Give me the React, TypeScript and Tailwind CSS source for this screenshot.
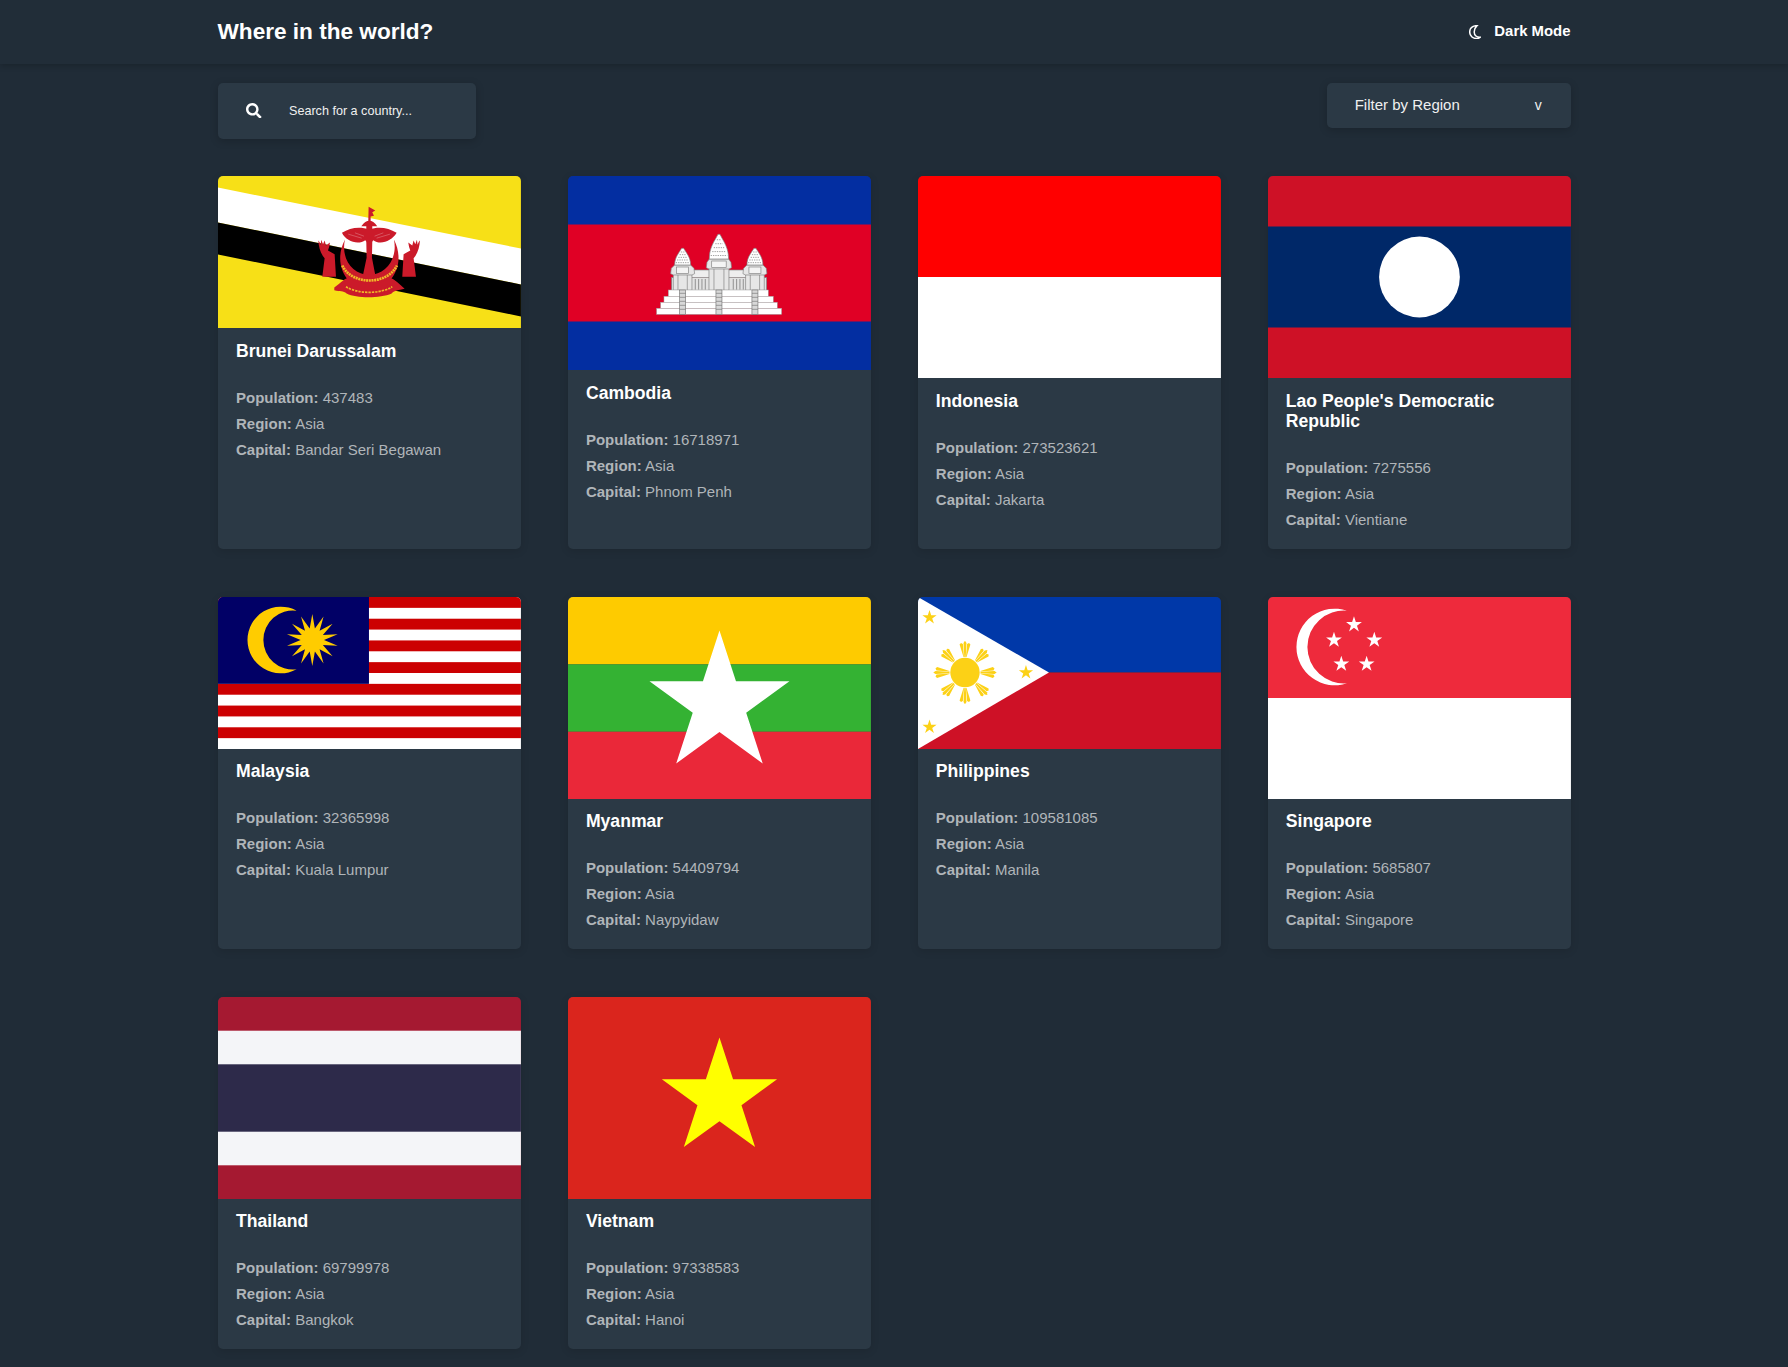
import { FaSearch } from "react-icons/fa";
import type { ReactNode } from "react";

function starPoints(cx: number, cy: number, r: number, n = 5, inner = 0.382) {
  const pts: string[] = [];
  for (let i = 0; i < n * 2; i++) {
    const rad = i % 2 === 0 ? r : r * inner;
    const a = -Math.PI / 2 + (i * Math.PI) / n;
    pts.push(`${(cx + rad * Math.cos(a)).toFixed(2)},${(cy + rad * Math.sin(a)).toFixed(2)}`);
  }
  return pts.join(" ");
}

function Svg({ h, children }: { h: number; children: ReactNode }) {
  return (
    <svg viewBox={`0 0 303 ${h}`} preserveAspectRatio="none" className="block w-full" style={{ height: h }}>
      {children}
    </svg>
  );
}

function Brunei() {
  const red = "#cb1a2a";
  const Hand = () => (
    <path d="M85,153 C88,156 90,160 92,166 L94,151 L99,164 L104,153 L108,168 C112,165 116,161 120,159 C119,168 117,176 114,183 L134,194 L138,262 L97,262 L104,206 C92,194 86,172 85,153Z" fill={red} />
  );
  return (
    <Svg h={152}>
      <rect width="303" height="152" fill="#f7e017" />
      <polygon points="0,11.5 303,72.5 303,108.5 0,46.5" fill="#fff" />
      <polygon points="0,46.5 303,108.5 303,140.5 0,78.5" fill="#000" />
      <g transform="translate(72 13.5) scale(0.3333)">
        <path d="M236,52 L256,63 L247,68 L252,79 L242,81 L242,95 L235,95Z" fill={red} />
        <path d="M214,110 Q238,78 262,110Z" fill={red} />
        <rect x="229" y="105" width="18" height="22" fill={red} />
        <path d="M238,120 C210,110 180,114 156,130 C168,156 205,168 226,152 L238,168 L250,152 C270,168 305,156 320,130 C295,114 265,110 238,120Z" fill={red} />
        <path d="M175,134 L215,146 M195,130 L222,140 M300,134 L260,146 M280,130 L254,140" stroke="#fff" strokeWidth="1.5" opacity="0.5" />
        <polygon points="229,155 247,155 246,205 257,262 218,262 230,205" fill={red} />
        <path d="M165,150 C126,225 172,300 238,300 C304,300 350,225 312,150 C324,208 287,256 238,256 C188,256 152,208 165,150Z" fill={red} />
        <path d="M157,228 C185,288 292,288 321,228" fill="none" stroke="#f0b828" strokeWidth="8" strokeDasharray="6 2" />
        <path d="M133,294 C150,282 160,270 175,264 C210,292 265,292 300,264 C315,270 330,285 344,298 C325,303 315,302 305,312 C270,327 200,327 170,312 C160,302 150,307 133,302Z" fill={red} />
        <path d="M168,292 C205,314 270,314 307,292" fill="none" stroke="#f0b828" strokeWidth="5" strokeDasharray="7 3" />
        <Hand />
        <g transform="translate(475 0) scale(-1 1)"><Hand /></g>
      </g>
    </Svg>
  );
}

function Tower({ x, top, spire, sw, body, base }: { x: number; top: number; spire: number; sw: number; body: number; base: number }) {
  const h = spire - top;
  const rows = [0.22, 0.38, 0.54, 0.7, 0.86];
  return (
    <g stroke="#808080" strokeWidth="2" fill="#fff">
      <path d={`M${x - body},${base} L${x - body},${spire + 30} L${x - body - 8},${spire + 26} L${x - body - 6},${spire + 10} L${x - sw},${spire} L${x + sw},${spire} L${x + body + 6},${spire + 10} L${x + body + 8},${spire + 26} L${x + body},${spire + 30} L${x + body},${base}Z`} fill="#e6e6e6" />
      <path d={`M${x - 3},${top} L${x + 3},${top} C${x + sw * 0.5},${top + h * 0.3} ${x + sw},${top + h * 0.55} ${x + sw},${spire} L${x - sw},${spire} C${x - sw},${top + h * 0.55} ${x - sw * 0.5},${top + h * 0.3} ${x - 3},${top}Z`} />
      {rows.map((l) => (
        <line key={l} x1={x - sw * l} x2={x + sw * l} y1={top + h * l} y2={top + h * l} strokeDasharray="4 3" stroke="#6f6f6f" />
      ))}
      <rect x={x - sw * 0.75} y={spire + 6} width={sw * 1.5} height={20} fill="#f4f4f4" />
      <line x1={x - body * 0.5} x2={x - body * 0.5} y1={spire + 30} y2={base} />
      <line x1={x + body * 0.5} x2={x + body * 0.5} y1={spire + 30} y2={base} />
      <line x1={x - body} x2={x + body} y1={spire + 30} y2={spire + 30} />
    </g>
  );
}

function Cambodia() {
  const steps = [
    [115, 225, 300, 20],
    [102, 244, 328, 19],
    [92, 262, 350, 18],
    [80, 280, 375, 18],
  ];
  return (
    <Svg h={194}>
      <rect width="303" height="194" fill="#032ea1" />
      <rect y="48.5" width="303" height="97" fill="#e00025" />
      <g transform="translate(62 39) scale(0.3333)">
        <rect x="125" y="188" width="285" height="38" fill="#e2e2e2" stroke="#808080" strokeWidth="2" />
        {[196, 206, 216, 226, 310, 320, 330, 340].map((x) => (
          <line key={x} x1={x} x2={x} y1="192" y2="224" stroke="#808080" strokeWidth="2.5" />
        ))}
        <rect x="185" y="165" width="165" height="23" fill="#eee" stroke="#8a8a8a" strokeWidth="2" />
        <Tower x={158} top={100} spire={150} sw={24} body={28} base={226} />
        <Tower x={375} top={100} spire={150} sw={24} body={28} base={226} />
        <Tower x={267} top={58} spire={132} sw={29} body={30} base={226} />
        {steps.map(([x, y, w, h]) => (
          <rect key={y} x={x} y={y} width={w} height={h} fill="#fff" stroke="#a0a0a0" strokeWidth="1.5" />
        ))}
        {[158, 267, 375].map((x) => (
          <g key={x}>
            <rect x={x - 9} y="225" width="18" height="73" fill="#d8d8d8" stroke="#777" strokeWidth="2" />
            {[235, 247, 259, 271, 283].map((y) => (
              <line key={y} x1={x - 9} x2={x + 9} y1={y} y2={y} stroke="#777" strokeWidth="2" />
            ))}
          </g>
        ))}
      </g>
    </Svg>
  );
}

function Indonesia() {
  return (
    <Svg h={202}>
      <rect width="303" height="101" fill="#ff0000" />
      <rect y="101" width="303" height="101" fill="#fff" />
    </Svg>
  );
}

function Lao() {
  return (
    <Svg h={202}>
      <rect width="303" height="202" fill="#ce1126" />
      <rect y="50.5" width="303" height="101" fill="#002868" />
      <circle cx="151.5" cy="101" r="40.4" fill="#fff" />
    </Svg>
  );
}

function Malaysia() {
  const u = 152 / 14;
  return (
    <Svg h={152}>
      <rect width="303" height="152" fill="#fff" />
      {[0, 2, 4, 6, 8, 10, 12].map((i) => (
        <rect key={i} y={i * u} width="303" height={u} fill="#cc0001" />
      ))}
      <rect width="151" height={u * 8} fill="#010066" />
      <g transform="translate(-3 -7) scale(0.3333)">
        <path d="M245,62 A100,100 0 1 0 245,238 A88.7,88.7 0 1 1 245,62Z" fill="#ffcc00" />
        <polygon points={starPoints(292, 150, 78, 14, 0.45)} fill="#ffcc00" />
      </g>
    </Svg>
  );
}

function Myanmar() {
  return (
    <Svg h={202}>
      <rect width="303" height="67.4" fill="#fecb00" />
      <rect y="67.4" width="303" height="67.4" fill="#34b233" />
      <rect y="134.7" width="303" height="67.3" fill="#ea2839" />
      <polygon points={starPoints(151.5, 107, 73.6)} fill="#fff" />
    </Svg>
  );
}

function Philippines() {
  const rays = [0, 45, 90, 135, 180, 225, 270, 315];
  return (
    <Svg h={152}>
      <rect width="303" height="75.5" fill="#0038a8" />
      <rect y="75.5" width="303" height="76.5" fill="#ce1126" />
      <polygon points="0,0 131,75.5 0,152" fill="#fff" />
      <g fill="#fcd116">
        <circle cx="47" cy="75.5" r="14.7" />
        {rays.map((a) => (
          <g key={a} transform={`rotate(${a} 47 75.5)`}>
            <polygon points="45.5,46 47,43.8 48.5,46 47.7,60 46.3,60" />
            <polygon points="41.6,47.6 43,46 44.9,47 46,60 45.5,60" />
            <polygon points="52.4,47.6 51,46 49.1,47 48,60 48.5,60" />
          </g>
        ))}
        <polygon points={starPoints(11.5, 20.5, 7.5)} />
        <polygon points={starPoints(108, 75.5, 7.5)} />
        <polygon points={starPoints(11.5, 130, 7.5)} />
      </g>
    </Svg>
  );
}

function Singapore() {
  return (
    <Svg h={202}>
      <rect width="303" height="101" fill="#ee2a3c" />
      <rect y="101" width="303" height="101" fill="#fff" />
      <g transform="translate(-2 -7) scale(0.3333)" fill="#fff">
        <path d="M243,62 A115,115 0 1 0 243,280 A109.4,109.4 0 1 1 243,62Z" />
        <polygon points={starPoints(264, 104, 25)} />
        <polygon points={starPoints(204, 150, 25)} />
        <polygon points={starPoints(325, 150, 25)} />
        <polygon points={starPoints(226, 222, 25)} />
        <polygon points={starPoints(302, 222, 25)} />
      </g>
    </Svg>
  );
}

function Thailand() {
  return (
    <Svg h={202}>
      <rect width="303" height="202" fill="#a51931" />
      <rect y="33.7" width="303" height="134.6" fill="#f4f5f8" />
      <rect y="67.3" width="303" height="67.4" fill="#2d2a4a" />
    </Svg>
  );
}

function Vietnam() {
  return (
    <Svg h={202}>
      <rect width="303" height="202" fill="#da251d" />
      <polygon points={starPoints(151.5, 101, 60.6)} fill="#ffff00" />
    </Svg>
  );
}

const countries = [
  { name: "Brunei Darussalam", population: "437483", capital: "Bandar Seri Begawan", Flag: Brunei },
  { name: "Cambodia", population: "16718971", capital: "Phnom Penh", Flag: Cambodia },
  { name: "Indonesia", population: "273523621", capital: "Jakarta", Flag: Indonesia },
  { name: "Lao People's Democratic Republic", population: "7275556", capital: "Vientiane", Flag: Lao },
  { name: "Malaysia", population: "32365998", capital: "Kuala Lumpur", Flag: Malaysia },
  { name: "Myanmar", population: "54409794", capital: "Naypyidaw", Flag: Myanmar },
  { name: "Philippines", population: "109581085", capital: "Manila", Flag: Philippines },
  { name: "Singapore", population: "5685807", capital: "Singapore", Flag: Singapore },
  { name: "Thailand", population: "69799978", capital: "Bangkok", Flag: Thailand },
  { name: "Vietnam", population: "97338583", capital: "Hanoi", Flag: Vietnam },
];

function Info({ label, value }: { label: string; value: string }) {
  return (
    <p className="h-[26px] leading-[26px]">
      <b className="font-bold">{label}:</b> {value}
    </p>
  );
}

export default function App() {
  return (
    <div className="min-h-[1367px] bg-[#202c37] font-['Liberation_Sans',Arial,sans-serif] text-white">
      <header className="flex h-[64px] items-center justify-between bg-[#212d38] pl-[217.5px] pr-[217.5px] shadow-[0_2px_6px_rgba(0,0,0,0.2)]">
        <h1 className="text-[22.6px] font-bold">Where in the world?</h1>
        <div className="flex items-center gap-[13px] text-[14.9px] font-bold">
          <svg viewBox="0 0 12 14" className="h-[14px] w-[12px]" fill="none" stroke="currentColor" strokeWidth="1.5">
            <path d="M8 .6C3.5 .9 .7 3.5 .7 7c0 3.8 3.1 6.5 6.8 6.5 1.5 0 2.9-.5 3.8-1.3C7.8 12.5 5.2 10.5 5.2 7c0-3 1.3-5 2.8-6.4Z" />
          </svg>
          <span className="-mt-[1px]">Dark Mode</span>
        </div>
      </header>
      <main className="pb-[19px] pl-[218px] pr-[217.3px]">
        <div className="flex items-start justify-between pt-[19px]">
          <label className="flex h-[56px] w-[258px] items-center rounded-[5px] bg-[#2b3945] pl-[28px] shadow-[0_2px_9px_rgba(0,0,0,0.2)]">
            <FaSearch className="-mt-[1px] h-[15.5px] w-[15.5px] text-white" />
            <input
              readOnly
              placeholder="Search for a country..."
              className="ml-[27.5px] w-[180px] bg-transparent text-[12.6px] text-white outline-none placeholder:text-[#f0f0f0]"
            />
          </label>
          <div className="flex h-[45px] w-[244px] items-center justify-between rounded-[5px] bg-[#2b3945] pb-[1px] pl-[28px] pr-[29px] text-[15px] text-[#f0f0f0] shadow-[0_2px_9px_rgba(0,0,0,0.2)]">
            <span>Filter by Region</span>
            <span className="text-[14px]">v</span>
          </div>
        </div>
        <div className="mt-[37px] grid grid-cols-4 gap-x-[47px] gap-y-[47.3px]">
          {countries.map(({ name, population, capital, Flag }) => (
            <article key={name} className="overflow-hidden rounded-[5px] bg-[#2b3945] shadow-[0_2px_9px_rgba(0,0,0,0.12)]">
              <Flag />
              <div className="px-[18px] pb-[16px] pt-[12.5px]">
                <h2 className="text-[17.6px] font-bold leading-[20.5px]">{name}</h2>
                <div className="mt-[23.75px] text-[15px] text-[#b0b5b9]">
                  <Info label="Population" value={population} />
                  <Info label="Region" value="Asia" />
                  <Info label="Capital" value={capital} />
                </div>
              </div>
            </article>
          ))}
        </div>
      </main>
    </div>
  );
}
